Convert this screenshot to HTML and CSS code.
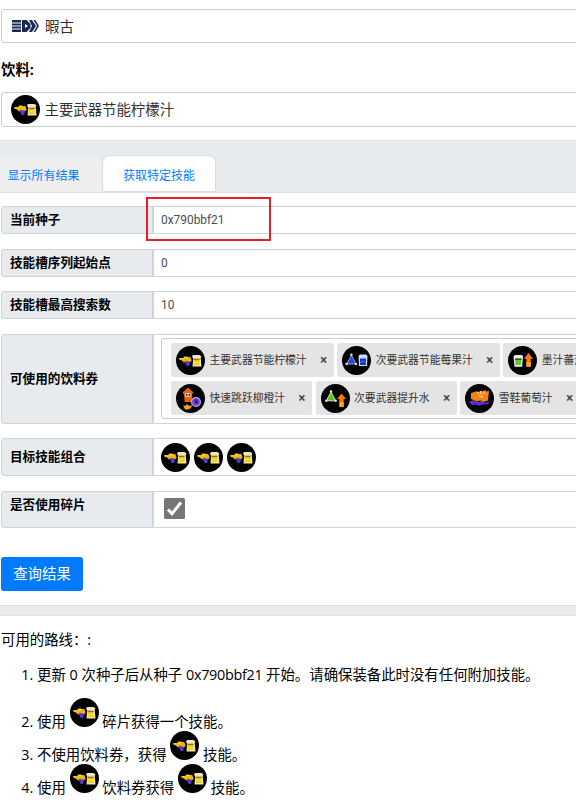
FILE: index.html
```
<!DOCTYPE html>
<html lang="zh-CN">
<head>
<meta charset="utf-8">
<title>饮料</title>
<link rel="stylesheet" href="styles.css">
</head>
<body>
<svg class="defs" aria-hidden="true">
  <symbol id="main" viewBox="0 0 29 29">
    <circle cx="14.5" cy="14.5" r="14.5" fill="#000"/>
    <path d="M2.5 12.5l2.5-.5 2 .5 1-2h3l1 .7 2-.4 1.2 2.2.3 2.5-3.5 1-2-1.2-2 1.2-2-2-2-.5z" fill="#e9b51b"/>
    <path d="M4.5 12.5l3 .6 1.5-1.6 3 .5" stroke="#ffe03c" fill="none"/>
    <path d="M8 16l2-.8 3.5.3.5 1.5-1 3h-2.5l-.6-2z" fill="#5b35c4"/>
    <path d="M16 10.5l1-1.5h6.5l2 1.5-.8 1.5.8 8.5h-9l.7-8z" fill="#eee6b5"/>
    <path d="M17.7 13h5.8l.2 6h-6z" fill="#f1ce10"/>
    <path d="M17.7 12.7h5.8v1.4h-5.8z" fill="#8a741b"/>
    <path d="M18 17l2-1 1.5 1 2-1.2" stroke="#fff06a" stroke-width=".8" fill="none"/>
  </symbol>
  <symbol id="sub" viewBox="0 0 29 29">
    <circle cx="14.5" cy="14.5" r="14.5" fill="#000"/>
    <path d="M9.5 9.5L14 18H4.5z" fill="#2445d8" stroke="#b9c3dc" stroke-width=".8"/>
    <circle cx="9.4" cy="8.8" r="1.3" fill="#d9dee9"/><circle cx="4.6" cy="18" r="1.2" fill="#d9dee9"/><circle cx="14" cy="18" r="1.2" fill="#d9dee9"/>
    <path d="M16.5 10l1.5-1.5h6l1.5 1.5-.5 10h-8z" fill="#cddcf8"/><path d="M18 12.5h6v6.5h-6z" fill="#1834bd"/>
    <path d="M18 16.5q3-3 6 0" stroke="#4c7cff" fill="none"/>
  </symbol>
  <symbol id="ink" viewBox="0 0 29 29">
    <circle cx="14.5" cy="14.5" r="14.5" fill="#000"/>
    <path d="M5.5 10.5L7 9h7l1 1.5-.8 10.2H6.5z" fill="#eef1dc"/>
    <path d="M7 13h6.5l-.4 6H7.5z" fill="#69c733"/><path d="M7 12.5h6.5v1.3H7z" fill="#203511"/>
    <path d="M20.5 7l4.7 5.8h-2.5v8h-4.3v-8H16z" fill="#f47a12"/>
    <path d="M18.4 16h4.3v4.8h-4.3z" fill="#f6a21b"/>
  </symbol>
  <symbol id="jump" viewBox="0 0 29 29">
    <circle cx="14.5" cy="14.5" r="14.5" fill="#000"/>
    <path d="M12 3.5l5.5 5-1.5 2 .7 7.5h-8L8 10.5 6.5 8.5z" fill="#e96210"/>
    <ellipse cx="12" cy="11" rx="3.2" ry="1.9" fill="#f7ead2"/><circle cx="10.7" cy="11" r="1" fill="#222"/><circle cx="13.5" cy="11" r="1" fill="#222"/>
    <path d="M7 21q3 2 4-1l2 2 3-1-1 3-3 1.5H9z" fill="#eea61a"/>
    <circle cx="20" cy="18" r="4.4" fill="#6741d5" stroke="#b9afe2" stroke-width="1.2"/>
    <path d="M20 15.5v2.8h2" stroke="#15103a" stroke-width="1.3" fill="none"/>
  </symbol>
  <symbol id="subup" viewBox="0 0 29 29">
    <circle cx="14.5" cy="14.5" r="14.5" fill="#000"/>
    <path d="M10 8l4.7 8.8H5.3z" fill="#54c529" stroke="#d6e0bf"/>
    <circle cx="10" cy="7.5" r="1.3" fill="#e5eccf"/><circle cx="5.2" cy="16.8" r="1.2" fill="#e5eccf"/><circle cx="14.7" cy="16.8" r="1.2" fill="#e5eccf"/>
    <path d="M20.5 9.5l4.7 5.5h-2.5v8h-4.3v-8H16z" fill="#f4780c"/><path d="M18.4 18h4.3v5h-4.3z" fill="#f5a219"/>
  </symbol>
  <symbol id="shoe" viewBox="0 0 29 29">
    <circle cx="14.5" cy="14.5" r="14.5" fill="#000"/>
    <path d="M4 18l4-2 4 2 5-1 3 2 5-2-2 3-5 .5-4 1-4-1-3 .5z" fill="#6132c6"/>
    <path d="M6 9l5-1.5 3 .5 2-1.5 2 1 2-1.5 1.5 1.5 2.5-.5-1 9.5-4 1.5-4-1.5-3 1-6-2.5z" fill="#f08115"/>
    <path d="M12 7.5l2 3M15 7l1.5 3.5M18.5 7.5l.5 3M14 12l4 1" stroke="#ffe6ac" fill="none"/>
  </symbol>
</svg>

<main class="page">
  <div class="content">
  <div class="select brand">
    <svg class="brand-logo" viewBox="0 0 27 12"><path d="M0 0h9v2.6H0zM0 3.6h9v2H0zM0 6.6h9v1.8H0zM0 9.4h9V12H0z" fill="#1c2951"/><path fill-rule="evenodd" d="M10 0h4.5l4 4v4l-4 4H10zM13 4v4l3-2z" fill="#1c2951"/><path d="M17 0h3l4 6-4 6h-3l3-6zM21.5 0h1.8L27 6l-3.7 6h-1.8l3.6-6z" fill="#1c2951"/></svg>
    <span>暇古</span>
  </div>
  <h2 class="heading">饮料:</h2>
  <div class="select drink"><svg class="icon"><use href="#main"/></svg><span>主要武器节能柠檬汁</span></div>

  <nav class="tabs"><a class="tab">显示所有结果</a><a class="tab active">获取特定技能</a></nav>

  <section class="form">
    <div class="row"><label class="label">当前种子</label><div class="value">0x790bbf21</div><span class="highlight"></span></div>
    <div class="row"><label class="label">技能槽序列起始点</label><div class="value">0</div></div>
    <div class="row"><label class="label">技能槽最高搜索数</label><div class="value">10</div></div>
    <div class="row tickets"><label class="label">可使用的饮料券</label>
      <div class="value">
        <div class="tag-box">
          <div class="tag-line">
            <span class="tag"><svg class="icon"><use href="#main"/></svg>主要武器节能柠檬汁<b>×</b></span>
            <span class="tag"><svg class="icon"><use href="#sub"/></svg>次要武器节能莓果汁<b>×</b></span>
            <span class="tag"><svg class="icon"><use href="#ink"/></svg>墨汁蕃茄汁<b>×</b></span>
          </div>
          <div class="tag-line">
            <span class="tag"><svg class="icon"><use href="#jump"/></svg>快速跳跃柳橙汁<b>×</b></span>
            <span class="tag"><svg class="icon"><use href="#subup"/></svg>次要武器提升水<b>×</b></span>
            <span class="tag"><svg class="icon"><use href="#shoe"/></svg>雪鞋葡萄汁<b>×</b></span>
          </div>
        </div>
      </div>
    </div>
    <div class="row target"><label class="label">目标技能组合</label><div class="value"><svg class="icon"><use href="#main"/></svg><svg class="icon"><use href="#main"/></svg><svg class="icon"><use href="#main"/></svg></div></div>
    <div class="row chunks"><label class="label">是否使用碎片</label><div class="value"><svg class="check" viewBox="0 0 21 21"><rect width="21" height="21" rx="1.5" fill="#767676"/><path d="M4 11.5l4 4.2L17 4.5" fill="none" stroke="#fff" stroke-width="3"/></svg></div></div>
    <button class="submit">查询结果</button>
  </section>

  <div class="separator"></div>
  <section class="routes">
    <p>可用的路线：:</p>
    <ol>
      <li class="first">更新 0 次种子后从种子 <span class="seed">0x790bbf21</span> 开始。请确保装备此时没有任何附加技能。</li>
      <li>使用 <svg class="icon"><use href="#main"/></svg> 碎片获得一个技能。</li>
      <li>不使用饮料券，获得 <svg class="icon"><use href="#main"/></svg> 技能。</li>
      <li>使用 <svg class="icon"><use href="#main"/></svg> 饮料券获得 <svg class="icon"><use href="#main"/></svg> 技能。</li>
    </ol>
  </section>
  </div>
</main>
</body>
</html>
```
FILE: styles.css
```
* { box-sizing: border-box; }
html, body { margin: 0; overflow: hidden; }
body { width: 576px; height: 810px; background: #fff; color: #000; font: 14.4px/22px "Open Sans", "Noto Sans CJK SC", sans-serif; }
.defs { position: absolute; width: 0; height: 0; }
.page { width: 576px; height: 810px; overflow: hidden; }
.content { width: 700px; padding-top: 9px; }
.icon { width: 29px; height: 29px; flex: none; }
.select { display: flex; align-items: center; margin-left: 1px; height: 34px; border: 1px solid #ccc; border-radius: 3px; padding-left: 9px; color: #333; }
.select span { padding-top: 1px; }
.brand-logo { width: 27px; height: 12px; margin: 0 6px 1px 1px; }
.heading { font-size: 14.4px; line-height: 22px; font-weight: 700; margin: 16px 0 11px 1px; }
.drink { height: 35px; gap: 4.5px; }
.tabs { display: flex; height: 53px; margin-top: 13px; padding-top: 14px; background: #e7ebee; border-top: 1px solid #dce1e5; border-bottom: 1px solid #dce1e5; font-size: 12px; }
.tab { color: #007bff; width: 102px; height: 37px; line-height: 42px; padding-left: 7.5px; background: #eee; border-radius: 0 8px 0 0; }
.tab.active { width: 114px; padding-left: 20px; line-height: 40px; background: #fff; border: 1px solid #e2d8db; border-radius: 8px 8px 0 0; }
.form { padding: 13px 0 0 1px; }
.row { position: relative; display: flex; height: 28px; margin-bottom: 14px; font-size: 12.6px; }
.row:first-child { margin-bottom: 15px; }
.label { flex: none; width: 152px; display: flex; align-items: center; padding-left: 8px; font-weight: 700; background: #e7ebee; border: 1px solid #ced4da; border-radius: 3px 0 0 3px; }
.value { flex: 1; display: flex; align-items: center; padding-left: 7px; border: 1px solid #ced4da; color: #495057; font-family: Roboto, sans-serif; font-size: 11.9px; }
.highlight { position: absolute; left: 145px; top: -9px; width: 125px; height: 44px; border: 2px solid #e51f27; }
.row.tickets { height: 90px; margin-top: 15px; }
.tickets .value { align-items: flex-start; padding-top: 3px; }
.tag-box { flex: none; width: 520px; height: 81px; padding: 4px 0 0 9px; border: 1px solid #ccc; border-radius: 3px; font: 10.8px/16px "Open Sans", "Noto Sans CJK SC", sans-serif; color: #333; }
.tag-line { display: flex; gap: 3.5px; margin-bottom: 4px; }
.tag { display: flex; flex: none; align-items: center; height: 34px; padding: 0 7px 0 5px; background: #e4e4e4; border-radius: 2px; white-space: nowrap; }
.tag .icon { margin-right: 4.5px; }
.tag b { width: 7px; margin-left: 13px; color: #444; font-size: 13.5px; }
.row.target { height: 38px; margin-bottom: 15px; }
.target .value { gap: 4px; }
.row.chunks { height: 37px; margin-bottom: 29px; }
.chunks .label { padding-bottom: 9px; }
.check { width: 21px; height: 21px; margin: 0 0 2px 3px; }
.submit { display: block; width: 82px; height: 34px; padding: 0; border: 0; border-radius: 3px; background: #007bff; color: #fff; font: 14.4px/32px "Open Sans", "Noto Sans CJK SC", sans-serif; }
.separator { height: 11px; margin-top: 14px; background: #e7ebee; border-top: 1px solid #dce1e5; border-bottom: 1px solid #dce1e5; }
.routes p { margin: 13px 0 13px 1px; }
.routes ol { margin: 0; padding-left: 37px; }
.routes li { height: 33px; line-height: 22px; white-space: nowrap; }
.routes li.first { height: 34px; }
.routes .icon { vertical-align: baseline; }
.seed { letter-spacing: -.3px; }
```
